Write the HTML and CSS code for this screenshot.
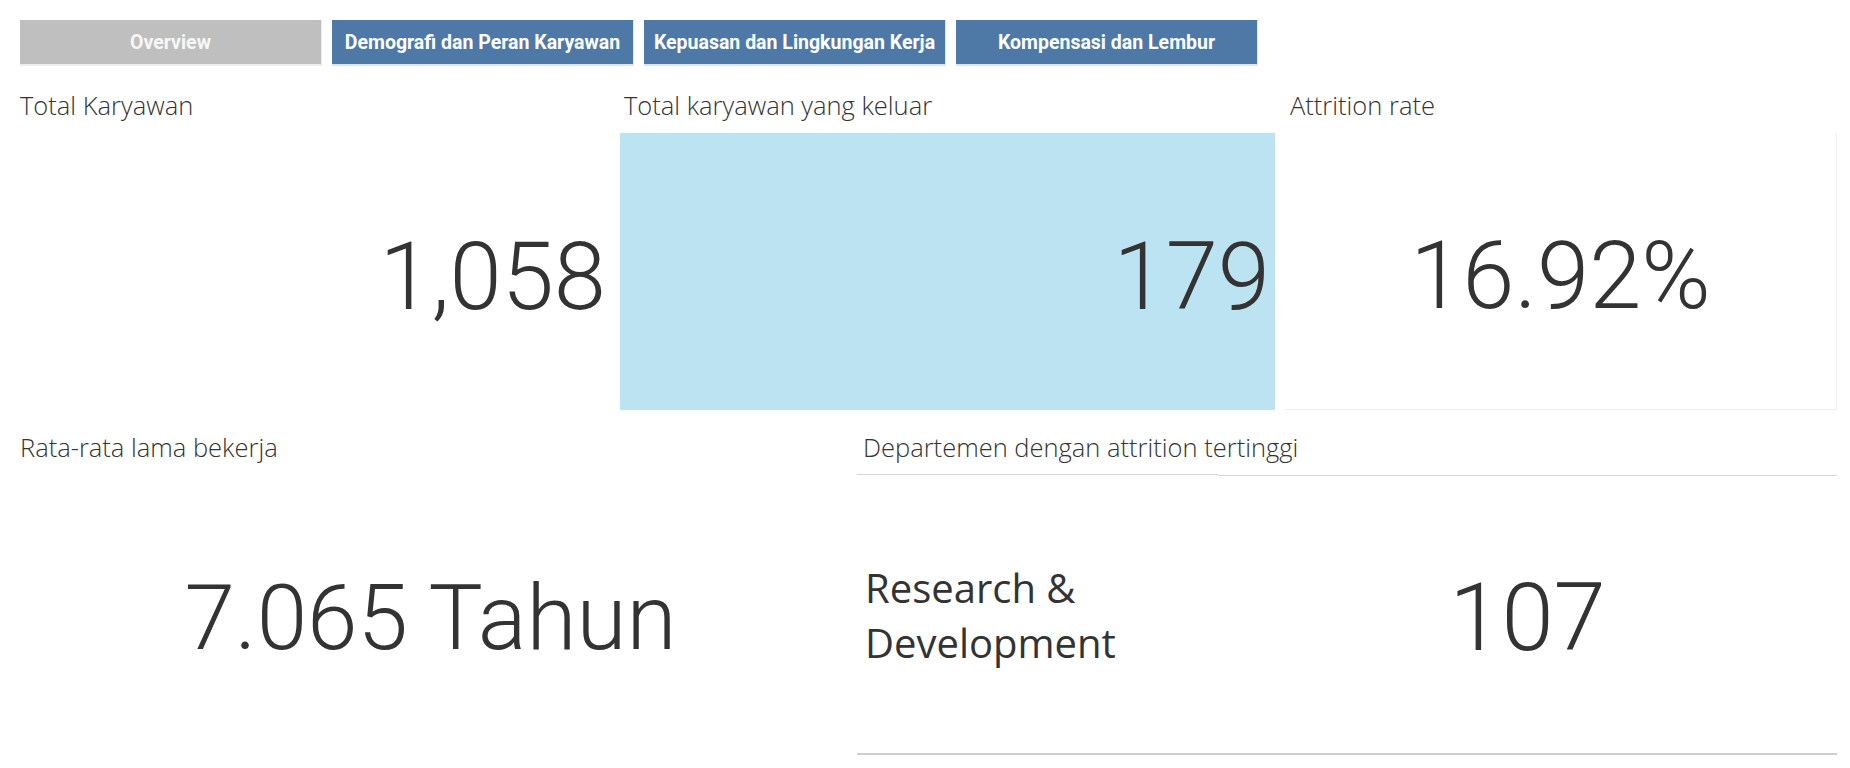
FILE: index.html
```html
<!DOCTYPE html>
<html lang="id">
<head>
<meta charset="utf-8">
<title>Overview</title>
<link rel="stylesheet" href="styles.css">
</head>
<body>
<div class="dash">
  <nav class="tabs">
    <a class="tab tab-active">Overview</a>
    <a class="tab">Demografi dan Peran Karyawan</a>
    <a class="tab">Kepuasan dan Lingkungan Kerja</a>
    <a class="tab">Kompensasi dan Lembur</a>
  </nav>

  <section class="row row-top">
    <div class="kpi kpi-total">
      <h2 class="ttl">Total Karyawan</h2>
      <div class="kbody kbody-right"><span class="num">1,058</span></div>
    </div>
    <div class="kpi kpi-out">
      <h2 class="ttl">Total karyawan yang keluar</h2>
      <div class="kbody kbody-right kbody-hl"><span class="num">179</span></div>
    </div>
    <div class="kpi kpi-rate">
      <h2 class="ttl">Attrition rate</h2>
      <div class="kbody kbody-center kbody-frame"><span class="num">16.92%</span></div>
    </div>
  </section>

  <section class="row row-bottom">
    <div class="kpi kpi-tenure">
      <h2 class="ttl">Rata-rata lama bekerja</h2>
      <div class="kbody kbody-center"><span class="num num-tenure">7.065 Tahun</span></div>
    </div>
    <div class="kpi kpi-dept">
      <h2 class="ttl">Departemen dengan attrition tertinggi</h2>
      <div class="dept-table">
        <div class="dept-cell dept-name">Research &amp;<br>Development</div>
        <div class="dept-cell dept-val"><span class="num">107</span></div>
      </div>
    </div>
  </section>
</div>
</body>
</html>
```
FILE: styles.css
```css
html, body {
  margin: 0;
  padding: 0;
  background: #ffffff;
}

.dash {
  width: 1850px;
  height: 768px;
  box-sizing: border-box;
  padding: 20px 0 0 20px;
  color: #333333;
  font-family: "Open Sans", "Liberation Sans", sans-serif;
  overflow: hidden;
}

/* ---------- tabs ---------- */
.tabs {
  display: flex;
  gap: 10px;
  height: 46px;
}

.tab {
  width: 302px;
  height: 46px;
  box-sizing: border-box;
  display: flex;
  align-items: center;
  justify-content: center;
  padding-top: 1px;
  background: #4e79a7;
  color: #ffffff;
  font-family: Roboto, "Liberation Sans", sans-serif;
  font-weight: 700;
  font-size: 19.5px;
  border-right: 1px solid #dfe5ec;
  border-bottom: 2px solid #dfe5ec;
  text-decoration: none;
  white-space: nowrap;
}

.tab-active {
  background: #bfbfbf;
  color: #f7f7f7;
  border-right-color: #ececec;
  border-bottom-color: #ececec;
}

/* ---------- rows ---------- */
.row {
  display: flex;
}

.row-top {
  height: 344px;
}

.kpi {
  display: flex;
  flex-direction: column;
}

.ttl {
  margin: 0;
  box-sizing: border-box;
  font-family: "Open Sans", sans-serif;
  font-weight: 300;
  font-size: 25.5px;
  line-height: 30px;
  color: #333333;
  white-space: nowrap;
}

.row-top .ttl {
  height: 67px;
  padding-top: 24px;
}

.row-bottom .ttl {
  height: 62px;
  padding-top: 20px;
}

.kbody {
  flex: 1;
  display: flex;
  align-items: center;
  box-sizing: border-box;
  padding-top: 10px;
}

.kbody-right {
  justify-content: flex-end;
}

.kbody-center {
  justify-content: center;
}

.num {
  font-family: Roboto, "Liberation Sans", sans-serif;
  font-weight: 300;
  font-size: 94px;
  line-height: 1;
  color: #333333;
  white-space: nowrap;
}

.num-tenure {
  font-size: 91px;
}

/* top row columns */
.kpi-total {
  width: 600px;
}
.kpi-total .kbody {
  padding-right: 14px;
}

.kpi-out {
  width: 655px;
}
.kpi-out .ttl {
  padding-left: 4px;
}
.kpi-out .kbody {
  padding-right: 5px;
}
.kbody-hl {
  background: #bbe3f1;
}

.kpi-rate {
  width: 562px;
}
.kpi-rate .ttl {
  padding-left: 15px;
}
.kbody-frame {
  margin-left: 10px;
  border-right: 1px solid #eef0f1;
  border-bottom: 1px solid #eef0f1;
}

/* bottom row */
.row-bottom {
  margin-top: 2px;
  height: 344px;
}

.kpi-tenure {
  width: 837px;
}
.kpi-tenure .kbody {
  height: 279px;
  flex: none;
  padding-right: 16px;
  padding-top: 10px;
}

.kpi-dept {
  width: 980px;
}
.kpi-dept .ttl {
  padding-left: 6px;
}

.dept-table {
  display: flex;
  height: 281px;
}

.dept-cell {
  box-sizing: border-box;
  border-top: 1px solid #d6d6d6;
  border-bottom: 2px solid #cfcfcf;
  display: flex;
  align-items: center;
}

.dept-name {
  width: 361px;
  padding: 2px 0 0 8px;
  font-family: "Open Sans", sans-serif;
  font-weight: 500;
  font-size: 40px;
  line-height: 55px;
  color: #333333;
}

.dept-val {
  flex: 1;
  margin-top: 1px;
  justify-content: center;
  padding-top: 6px;
}
```
